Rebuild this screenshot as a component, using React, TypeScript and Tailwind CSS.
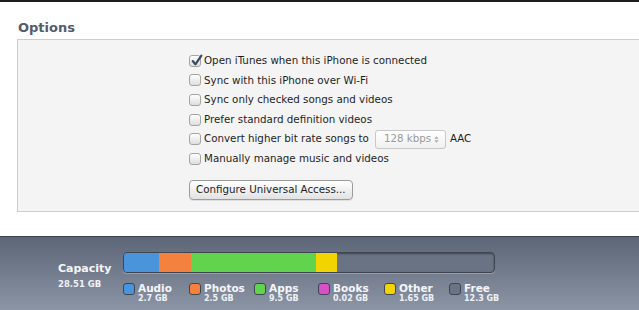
import React from 'react';

const font = { fontFamily: '"DejaVu Sans", "Liberation Sans", sans-serif' };

const options = [
  { label: 'Open iTunes when this iPhone is connected', checked: true },
  { label: 'Sync with this iPhone over Wi-Fi', checked: false },
  { label: 'Sync only checked songs and videos', checked: false },
  { label: 'Prefer standard definition videos', checked: false },
  { label: 'Convert higher bit rate songs to', checked: false, select: true },
  { label: 'Manually manage music and videos', checked: false },
];

const segments = [
  { name: 'audio', width: 35, color: 'bg-[#4a94dc]' },
  { name: 'photos', width: 32, color: 'bg-[#f5813e]' },
  { name: 'apps', width: 125, color: 'bg-[#62d34c]' },
  { name: 'other', width: 21, color: 'bg-[#f2d500]' },
];

const legend = [
  { label: 'Audio', size: '2.7 GB', color: 'bg-[#4a94dc]', w: 'w-[66px]' },
  { label: 'Photos', size: '2.5 GB', color: 'bg-[#f5813e]', w: 'w-[65px]' },
  { label: 'Apps', size: '9.5 GB', color: 'bg-[#62d34c]', w: 'w-[64px]' },
  { label: 'Books', size: '0.02 GB', color: 'bg-[#d84fc6]', w: 'w-[66px]' },
  { label: 'Other', size: '1.65 GB', color: 'bg-[#f2d500]', w: 'w-[65px]' },
  { label: 'Free', size: '12.3 GB', color: 'bg-[#6b7484]', w: 'w-[60px]' },
];

function Checkbox({ checked }: { checked: boolean }) {
  return (
    <div className="relative w-[12px] h-[12px] rounded-[3px] border border-[#a4a4a4] bg-gradient-to-b from-white to-[#dedede] shrink-0">
      {checked && (
        <svg viewBox="0 0 12 12" className="absolute -top-[2px] left-[0px] w-[13px] h-[13px]">
          <path d="M2.5 6.5 L5 9.5 L10.5 1.5" fill="none" stroke="#3b4a63" strokeWidth="2" strokeLinecap="round" strokeLinejoin="round" />
        </svg>
      )}
    </div>
  );
}

export default function App() {
  return (
    <div className="w-[639px] h-[310px] overflow-hidden bg-white flex flex-col border-t-2 border-[#1d1d1d]" style={font}>
      <h2 className="pl-[18px] pt-[18px] h-[37px] text-[13px] font-bold text-[#525c6b] leading-[16px]">Options</h2>

      <div className="ml-[17px] w-[640px] h-[173px] border border-[#cdcdcd] bg-[#f4f4f4] pl-[171px] pt-[11px]">
        {options.map((o) => (
          <div key={o.label} className="h-[19.6px] flex items-center gap-[3px] text-[10.3px] text-[#1e1e1e]">
            <Checkbox checked={o.checked} />
            <span className="whitespace-nowrap">{o.label}</span>
            {o.select && (
              <>
                <div className="ml-[3px] w-[71px] h-[19px] rounded-[3px] border border-[#c8c8c8] bg-gradient-to-b from-white to-[#f0f0f0] flex items-center justify-between pl-[8px] pr-[6px] text-[#9a9a9a]">
                  <span>128 kbps</span>
                  <svg viewBox="0 0 6 10" className="w-[5px] h-[9px]">
                    <path d="M0.5 4 L3 1 L5.5 4 Z M0.5 6 L3 9 L5.5 6 Z" fill="#a8a8a8" />
                  </svg>
                </div>
                <span className="ml-[1px]">AAC</span>
              </>
            )}
          </div>
        ))}
        <button className="mt-[11px] h-[20px] px-[6px] rounded-[4px] border border-[#9c9c9c] bg-gradient-to-b from-white to-[#e2e2e2] text-[10.3px] text-[#1e1e1e] shadow-[0_1px_0_rgba(0,0,0,0.08)]">
          Configure Universal Access...
        </button>
      </div>

      <div className="flex-1 mt-[22px]" />

      <div className="h-[74px] border-t border-[#3d434d] bg-gradient-to-b from-[#5d6677] to-[#8c95a5] flex text-white">
        <div className="w-[123px] pl-[58px] pt-[25px]">
          <div className="text-[11px] font-bold leading-[14px] text-[#f4f6fa]">Capacity</div>
          <div className="text-[8.5px] font-bold leading-[11px] mt-[3px] text-[#eef1f6]">28.51 GB</div>
        </div>
        <div className="pt-[15px]">
          <div className="w-[372px] h-[21px] rounded-[4px] border border-[#3f4652] bg-[#6a7383] overflow-hidden flex shadow-[inset_0_1px_2px_rgba(0,0,0,0.4),0_1px_0_rgba(255,255,255,0.25)]">
            {segments.map((s) => (
              <div key={s.name} className={`${s.color} h-full`} style={{ width: s.width }} />
            ))}
          </div>
          <div className="flex mt-[10px]">
            {legend.map((l) => (
              <div key={l.label} className={`${l.w} flex gap-[3px]`}>
                <div className={`${l.color} w-[12px] h-[12px] rounded-[3px] border border-[#3f4652] shrink-0`} />
                <div className="flex flex-col -mt-[1px]">
                  <span className="text-[10.5px] font-bold leading-[12px] text-[#f4f6fa]">{l.label}</span>
                  <span className="text-[8px] font-bold leading-[9px] text-[#eef1f6] whitespace-nowrap">{l.size}</span>
                </div>
              </div>
            ))}
          </div>
        </div>
      </div>
    </div>
  );
}
